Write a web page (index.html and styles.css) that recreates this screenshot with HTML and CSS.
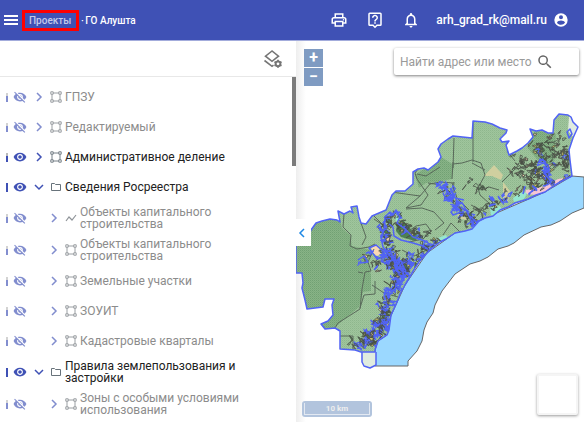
FILE: index.html
```html
<!DOCTYPE html>
<html lang="ru">
<head>
<meta charset="utf-8">
<meta name="viewport" content="width=device-width, initial-scale=1">
<title>ГО Алушта</title>
<link rel="stylesheet" href="styles.css">
</head>
<body>
<svg class="sprite" aria-hidden="true">
  <symbol id="eye" viewBox="0 0 24 24"><path d="M12 4.500C7 4.500 2.730 7.610 1 12c1.730 4.390 6 7.500 11 7.500s9.270-3.110 11-7.500c-1.730-4.390-6-7.500-11-7.500zM12 17c-2.760 0-5-2.240-5-5s2.240-5 5-5 5 2.240 5 5-2.240 5-5 5zm0-8c-1.660 0-3 1.340-3 3s1.340 3 3 3 3-1.340 3-3-1.340-3-3-3z"/></symbol>
  <symbol id="eye-off" viewBox="0 0 24 24"><path d="M12 7c2.760 0 5 2.240 5 5 0 .65-.13 1.260-.36 1.830l2.920 2.920c1.510-1.260 2.700-2.890 3.430-4.750-1.730-4.390-6-7.500-11-7.500-1.400 0-2.740.25-3.980.7l2.160 2.160C10.740 7.130 11.350 7 12 7zM2 4.270l2.280 2.280.46.46C3.080 8.300 1.780 10.020 1 12c1.730 4.390 6 7.500 11 7.500 1.550 0 3.030-.3 4.380-.84l.42.42L19.730 22 21 20.730 3.270 3 2 4.270zM7.530 9.800l1.550 1.550c-.05.21-.08.43-.08.65 0 1.660 1.340 3 3 3 .22 0 .44-.03.65-.08l1.550 1.550c-.67.33-1.410.53-2.200.53-2.760 0-5-2.240-5-5 0-.79.2-1.530.53-2.200zm4.310-.78l3.150 3.150.02-.16c0-1.660-1.340-3-3-3l-.17.01z"/></symbol>
  <symbol id="right" viewBox="0 0 12 12"><path d="M4 2l4 4-4 4" fill="none" stroke="currentColor" stroke-width="1.500"/></symbol>
  <symbol id="down" viewBox="0 0 12 12"><path d="M2 4l4 4 4-4" fill="none" stroke="currentColor" stroke-width="1.500"/></symbol>
  <symbol id="area" viewBox="0 0 12 12"><path d="M2 2h8v8H2z" fill="none" stroke="currentColor" stroke-width=".9"/><path d="M.8.800h2.400v2.400H.8zM8.800.800h2.400v2.400H8.800zM.8 8.800h2.400v2.400H.8zM8.800 8.800h2.400v2.400H8.800z" fill="#fff" stroke="currentColor" stroke-width=".9"/></symbol>
  <symbol id="line" viewBox="0 0 12 12"><path d="M1 9l3-4 3 3 4-5" fill="none" stroke="currentColor" stroke-width="1.200"/></symbol>
  <symbol id="folder" viewBox="0 0 12 12"><path d="M1.500 2.500h3l1 1h5v6h-9z" fill="none" stroke="currentColor"/></symbol>
</svg>

<header class="bar">
  <button class="icon-btn menu" aria-label="Меню"><svg viewBox="0 0 14 10"><path d="M0 1h14M0 5h14M0 9h14" stroke="currentColor" stroke-width="2"/></svg></button>
  <nav class="crumbs"><a class="marked" href="#">Проекты</a><span class="dot">·</span><a href="#">ГО Алушта</a></nav>
  <div class="tools">
    <button class="icon-btn" aria-label="Печать"><svg viewBox="0 0 24 24"><path d="M19 8h-1V3H6v5H5c-1.660 0-3 1.340-3 3v6h4v4h12v-4h4v-6c0-1.660-1.340-3-3-3zM8 5h8v3H8V5zm8 12v2H8v-4h8v2zm2-2v-2H6v2H4v-4c0-.55.45-1 1-1h14c.55 0 1 .45 1 1v4h-2z"/><circle cx="18" cy="11.500" r="1"/></svg></button>
    <button class="icon-btn" aria-label="Помощь"><svg viewBox="0 0 24 24"><path d="M19 2H5a2 2 0 0 0-2 2v14a2 2 0 0 0 2 2h4l3 3 3-3h4a2 2 0 0 0 2-2V4a2 2 0 0 0-2-2zm0 16h-4.830L12 20.170 9.830 18H5V4h14v14zM11 15h2v2h-2zM12 7c1.100 0 2 .9 2 2 0 2-3 1.750-3 5h2c0-2.250 3-2.500 3-5 0-2.210-1.790-4-4-4S8 6.790 8 9h2c0-1.100.9-2 2-2z"/></svg></button>
    <button class="icon-btn" aria-label="Уведомления"><svg viewBox="0 0 24 24"><path d="M12 22c1.100 0 2-.9 2-2h-4c0 1.100.9 2 2 2zm6-6v-5c0-3.070-1.630-5.640-4.500-6.320V4a1.500 1.500 0 0 0-3 0v.68C7.640 5.360 6 7.920 6 11v5l-2 2v1h16v-1l-2-2zm-2 1H8v-6c0-2.480 1.510-4.500 4-4.500s4 2.020 4 4.500v6z"/></svg></button>
  </div>
  <button class="user">arh_grad_rk@mail.ru<svg viewBox="0 0 24 24"><path d="M12 2a10 10 0 1 0 0 20 10 10 0 0 0 0-20zm0 3a3 3 0 1 1 0 6 3 3 0 0 1 0-6zm0 14.200c-2.500 0-4.710-1.280-6-3.220.03-1.990 4-3.080 6-3.080s5.970 1.090 6 3.080a7.200 7.200 0 0 1-6 3.220z"/></svg></button>
</header>

<div class="work">
  <aside class="side">
    <div class="side-head"><button class="icon-btn layers" aria-label="Настройка слоёв"><svg viewBox="0 0 20 20"><path d="M9 2L2.500 7.200 9 12.300l6.500-5.100z" fill="none" stroke="currentColor" stroke-width="1.600"/><path d="M1.500 11.500L9 17.300l1.500-1.200" fill="none" stroke="currentColor" stroke-width="1.600"/><circle cx="15" cy="14.800" r="2.400" fill="none" stroke="currentColor" stroke-width="2"/><path d="M15 10.800v1.500M15 17.300v1.500M11.500 12.800l1.500.9M17 15.900l1.500.9M11.500 16.800l1.500-.9M17 13.700l1.500-.9" stroke="currentColor" stroke-width="1.800"/></svg></button></div>
    <ul class="tree">
      <li class="row off"><i class="info"></i><button class="see" aria-label="Показать слой"><svg><use href="#eye-off"/></svg></button><button class="arrow" aria-label="Развернуть"><svg><use href="#right"/></svg></button><svg class="kind"><use href="#area"/></svg><span>ГПЗУ</span></li>
      <li class="row off"><i class="info"></i><button class="see" aria-label="Показать слой"><svg><use href="#eye-off"/></svg></button><button class="arrow" aria-label="Развернуть"><svg><use href="#right"/></svg></button><svg class="kind"><use href="#area"/></svg><span>Редактируемый</span></li>
      <li class="row"><i class="info"></i><button class="see" aria-label="Скрыть слой"><svg><use href="#eye"/></svg></button><button class="arrow" aria-label="Развернуть"><svg><use href="#right"/></svg></button><svg class="kind"><use href="#area"/></svg><span>Административное деление</span></li>
      <li class="row"><i class="info full"></i><button class="see" aria-label="Скрыть слой"><svg><use href="#eye"/></svg></button><button class="arrow" aria-label="Свернуть"><svg><use href="#down"/></svg></button><svg class="kind"><use href="#folder"/></svg><span>Сведения Росреестра</span></li>
      <li class="row off child"><i class="info"></i><button class="see" aria-label="Показать слой"><svg><use href="#eye-off"/></svg></button><button class="arrow" aria-label="Развернуть"><svg><use href="#right"/></svg></button><svg class="kind"><use href="#line"/></svg><span>Объекты капитального строительства</span></li>
      <li class="row off child"><i class="info"></i><button class="see" aria-label="Показать слой"><svg><use href="#eye-off"/></svg></button><button class="arrow" aria-label="Развернуть"><svg><use href="#right"/></svg></button><svg class="kind"><use href="#area"/></svg><span>Объекты капитального строительства</span></li>
      <li class="row off child"><i class="info"></i><button class="see" aria-label="Показать слой"><svg><use href="#eye-off"/></svg></button><button class="arrow" aria-label="Развернуть"><svg><use href="#right"/></svg></button><svg class="kind"><use href="#area"/></svg><span>Земельные участки</span></li>
      <li class="row off child"><i class="info"></i><button class="see" aria-label="Показать слой"><svg><use href="#eye-off"/></svg></button><button class="arrow" aria-label="Развернуть"><svg><use href="#right"/></svg></button><svg class="kind"><use href="#area"/></svg><span>ЗОУИТ</span></li>
      <li class="row off child"><i class="info"></i><button class="see" aria-label="Показать слой"><svg><use href="#eye-off"/></svg></button><button class="arrow" aria-label="Развернуть"><svg><use href="#right"/></svg></button><svg class="kind"><use href="#area"/></svg><span>Кадастровые кварталы</span></li>
      <li class="row"><i class="info full"></i><button class="see" aria-label="Скрыть слой"><svg><use href="#eye"/></svg></button><button class="arrow" aria-label="Свернуть"><svg><use href="#down"/></svg></button><svg class="kind"><use href="#folder"/></svg><span>Правила землепользования и застройки</span></li>
      <li class="row off child"><i class="info"></i><button class="see" aria-label="Показать слой"><svg><use href="#eye-off"/></svg></button><button class="arrow" aria-label="Развернуть"><svg><use href="#right"/></svg></button><svg class="kind"><use href="#area"/></svg><span>Зоны с особыми условиями использования</span></li>
    </ul>
    <div class="thumb"></div>
  </aside>

  <main class="map">
    <svg class="canvas" viewBox="296 41 288 381" preserveAspectRatio="xMinYMin slice" role="img" aria-label="Карта">
      <defs>
        <pattern id="light" width="2" height="2" patternUnits="userSpaceOnUse"><rect width="2" height="2" fill="#a0c59d"/><rect width="1" height="1" fill="#8eb78d"/><rect x="1" y="1" width="1" height="1" fill="#97bf95"/></pattern>
        <pattern id="dark" width="2" height="2" patternUnits="userSpaceOnUse"><rect width="2" height="2" fill="#88b486"/><rect width="1" height="1" fill="#71a074"/><rect x="1" y="1" width="1" height="1" fill="#7da97e"/></pattern>
        <clipPath id="land"><path id="outline" d="M296 245L303 243 307 239 311 230 316 223 322 221 330 219 337 220 340 222 338 211 344 214 350 211 353 213 351 207 357 206 359 217 361 223 366 224 372 216 379 213 386 210 390 200 392 195 396 191 405 191 413 184 413 172 418 169 424 168 428 170 438 162 441 157 438 149 441 144 448 139 453 136 472 138 473 121 485 122 492 124 500 128 507 130 506 133 500 139 502 142 509 141 506 145 509 155 517 151 522 148 528 143 533 137 530 129 536 131 542 130 548 133 553 133 554 120 559 114 568 115 571 117 573 122 578 127 573 138 569 150 570 160 572 176 560 182 552 187 545 192 536 195 528 199 515 203 508 207 500 210 493 216 485 218 479 221 472 229 465 231 455 233 446 239 440 242 431 249 427 253 419 262 415 268 405 285 400 294 397 302 391 315 389 330 387 335 378 341 375 350 375 352 361 352 355 350 340 349 340 331 335 328 325 329 321 324 328 321 333 315 332 305 334 299 325 299 323 307 307 309 305 300 302 288 303 283 302 273 296 273z"/></clipPath>
      </defs>
      <path class="sea" d="M375 366V350L378 341 387 335 390 318 405 285 427 253 455 233 485 218 545 192 572 176 584 177V208L572 213 560 221 551 225 541 227 524 235 514 243 508 246 498 249 488 257 480 261 470 264 455 274 442 291 435 305 433 313 427 322 424 330 422 341 417 351 408 361V366z"/>
      <path class="pale" d="M361 352h15v14l-7 2-7-4z"/>
      <g clip-path="url(#land)">
        <path d="M296 41h288v381H296z" fill="url(#light)"/>
        <path d="M296 246L311 215 340 219 342 228 350 235 352 246 371 250 368 263 371 275 371 291 363 292 359 307 334 328 296 340z" fill="url(#dark)"/>
        <path d="M415 175L441 157 454 165 452 179 436 182 426 183 419 188zM535 130L556 134 554 166 540 163 527 147z" fill="url(#dark)"/>
        <path d="M569 116l10 8 0 5-5 9-6-7z" fill="#e0ecdf"/>
        <path d="M484 176l10-11 9 10-2 5-9-4zM503 182l7 9-2 11-5-4z" fill="#cfcf9f"/>
        <path d="M457 215l6-3 4 8-6-1z" fill="#cfcf9f"/>
        <path d="M397 224l6-4 10 12 7 4-5 5-14-4-5-6zM384 234l6-2 0 12-6-3z" fill="#4d8052"/>
        <path d="M371 246l7 0 3 8-4 2-5-4z" fill="#f9d8b4"/>
        <path d="M526 190l20-4 12-7 13-2-12 9-22 9-12-1z" fill="#f6c6d5"/>
        <path d="M513 198l9-6 5 1-3 6-10 3zM490 208l10-2 3 5-12 5zM438 238l8-3 2 4-9 4zM395 217l5-2 0 5-4 1z" fill="#96e6d0"/>
        <g class="quarters">
          <path d="M344 214l-1 13 8 8-1 11 7 3 12-2 6-3M361 223l5 14-4 8M335 328l3-5 22-14 2-20 3-17 6-1-3-9 6-13M363 273l-5-1M373 215l12 12-2 8M372 285l12 8 14 4M360 308l4-13 11-1v-13M340 336h13v14"/>
          <path d="M391 192l29 4-14 12 15-3 7-10-11-16-2-6 3-4M420 196l10-12 10-2 14 1M406 209l16-1 12 4M417 174l9 2 14-9M454 138l-1 30M453 162l-1 17M473 122v40M454 182l-2 20 10 8M473 122v0M428 183l13 2M472 163l13 7M453 164l9-1 10-3 9 3 4 12M485 175l-7 13 2 7 10 9M452 183l5 15 12 12M502 182l13-13 12-2M434 212l10 11-9 7M443 235l8-12 10 10M374 219l16 11"/>
          <path d="M404 234l12-8 10-2 5 7-8 8-14 3M402 250l12 6 15-7M507 151l8 10M499 190l-10-3-8 3M471 205l16 8"/>
        </g>
        <g id="parcels"></g>
        <g class="zones">
          <path d="M384 218l6-6 3 3 3-5 4 7-3 6 8 6 8 8 12 4-2 5-10-3-12-3-7-4-1-9-4-3M385 218l-1 12-3 7 2 10 7 9 8 7M369 248l7-3 7 6 0 6-6 2zM358 260l6-4 4 6-8 1M390 250l5 14 8 8 1 8-8 4-1 9"/>
          <path d="M443 186l8 9-5 4-3-6M450 188l7 13 6 3 6 12 5 10M455 198l9 2M457 206l-6 6 2 3 8-3M470 216l10 10M546 162l-6-3-1 3 7 2-2 9 5 6M525 186l-2 8M498 196l4 6 6 0"/>
        </g>
      </g>
      <use href="#outline" class="border"/>
      <path class="border" d="M362 352v10l2 4 6 2 6-3v-13M567 132l3-3 2 5-3 4z"/>
    </svg>
    <div class="zoom"><button aria-label="Приблизить">+</button><button aria-label="Отдалить">−</button></div>
    <form class="search"><input type="text" placeholder="Найти адрес или место" aria-label="Найти адрес или место"><button aria-label="Искать"><svg viewBox="0 0 24 24"><path d="M15.500 14h-.79l-.28-.27A6.500 6.500 0 1 0 13.730 14.430l.27.28v.79l5 4.990L20.490 19zm-6 0a4.500 4.500 0 1 1 0-9 4.500 4.500 0 0 1 0 9z"/></svg></button></form>
    <button class="collapse" aria-label="Свернуть панель"><svg viewBox="0 0 12 12"><path d="M8 2L4 6l4 4" fill="none" stroke="currentColor" stroke-width="1.500"/></svg></button>
    <div class="scale"><span>10 km</span></div>
    <button class="basemap" aria-label="Подложка"></button>
  </main>
</div>
<script src="map.js"></script>
</body>
</html>
```
FILE: styles.css
```css
* { box-sizing: border-box; }
body {
  margin: 0;
  height: 100vh;
  display: flex;
  flex-direction: column;
  overflow: hidden;
  background: #fff;
  color: #212121;
  font-family: Roboto, "Liberation Sans", sans-serif;
  font-size: 12px;
}
button { padding: 0; border: 0; background: none; color: inherit; font: inherit; cursor: pointer; }
svg { display: block; fill: currentColor; }
.sprite { position: absolute; width: 0; height: 0; }

.bar {
  display: flex;
  align-items: center;
  height: 41px;
  flex: none;
  padding: 0 15px 0 4px;
  background: #3f51b5;
  border-bottom: 1px solid #a3acdc;
  color: #fff;
}
.menu svg { width: 14px; height: 10px; }
.crumbs { display: flex; align-items: center; margin-left: 4px; font-size: 10px; font-weight: 500; }
.crumbs a { color: inherit; text-decoration: none; }
.crumbs .marked { border: 3px solid #f00; padding: 0 5px 0 4px; line-height: 15px; color: #c5cae9; }
.crumbs .dot { width: 6px; text-align: center; }
.tools { display: flex; gap: 18px; margin-left: auto; }
.tools svg { width: 18px; height: 18px; }
.user svg { width: 16px; height: 16px; }
.user { display: flex; align-items: center; gap: 6px; margin-left: 16px; font-weight: 500; }

.work { display: flex; flex: 1; min-height: 0; }
.side { position: relative; width: 296px; flex: none; overflow: hidden; }
.side-head {
  display: flex;
  align-items: center;
  justify-content: flex-end;
  height: 36px;
  padding-right: 13px;
  border-bottom: 1px solid #e8e8e8;
  color: #757575;
}
.layers svg { width: 20px; height: 20px; }
.tree { margin: 0; padding: 5px 40px 0 6px; list-style: none; }
.row { display: flex; align-items: center; min-height: 30px; padding: 4px 0; line-height: 12px; }
.row button { flex: none; color: #3f51b5; }
.row svg { width: 12px; height: 12px; }
.row .see svg { width: 14px; height: 14px; }
.info { flex: none; width: 2px; height: 9px; margin-right: 5px; background: linear-gradient(#bbb 3px, #3f51b5 3px); }
.info.full { background: #3f51b5; }
.arrow { margin-left: 6px; }
.kind { flex: none; margin: 0 3px 0 5px; color: #68737b; }
.off { color: #8c8c8c; }
.off button, .off .info { opacity: .65; }
.off .kind { color: #8f9499; }
.child .arrow { margin-left: 21px; }
.thumb { position: absolute; top: 36px; right: 0; width: 4px; height: 89px; background: #7b7b7b; }

.map { position: relative; flex: 1; min-width: 0; overflow: hidden; }
.map::before { content: ""; position: absolute; inset: 0 auto 0 0; width: 10px; background: linear-gradient(90deg, #eee, #fff); }
.canvas { position: absolute; inset: 0; width: 100%; height: 100%; }
.sea { fill: #9bd8ff; stroke: #666; stroke-width: 1; }
.pale { fill: #e0ecdf; }
.border { fill: none; stroke: #5163f5; stroke-width: 1.500; stroke-linejoin: round; }
.quarters { fill: none; stroke: #59695a; stroke-width: 1; }
.zones { fill: none; stroke: #5163f5; stroke-width: 1.500; stroke-linejoin: round; }
.zoom { position: absolute; top: 8px; left: 8px; display: grid; gap: 1px; }
.zoom button { width: 19px; height: 18px; background: #7f9bc2; color: #fff; font-size: 16px; font-weight: 700; line-height: 18px; }
.search {
  position: absolute;
  top: 7px;
  right: 5px;
  display: flex;
  align-items: center;
  width: 185px;
  height: 27px;
  padding: 0 6px;
  border-radius: 2px;
  background: #fff;
  box-shadow: 0 1px 3px rgba(0, 0, 0, .5);
}
.search input { width: 136px; padding: 0; border: 0; outline: 0; background: none; font: 12px Roboto, sans-serif; }
.search input::placeholder { color: #9a9a9a; }
.search svg { width: 18px; height: 18px; fill: #666; }
.collapse { position: absolute; left: 0; top: 178px; width: 15px; height: 27px; background: #fff; color: #1e88e5; }
.collapse svg { width: 12px; height: 12px; }
.scale {
  position: absolute;
  left: 6px;
  bottom: 5px;
  width: 70px;
  padding: 2px;
  border-radius: 3px;
  background: #b2c4dd;
}
.scale span { display: block; height: 12px; border: 1px solid #e3e9f2; border-top: 0; color: #eee; font-size: 8px; font-weight: 700; line-height: 11px; text-align: center; }
.basemap { position: absolute; right: 6px; bottom: 7px; width: 41px; height: 41px; border: 2px solid #f5f5f5; border-radius: 2px; background: #fff; box-shadow: 0 1px 3px rgba(0, 0, 0, .4); }
```
FILE: map.js
```js
// Generalised parcel boundaries, drawn as short closed outlines inside each settlement.
let seed = 7;
const rnd = () => (seed = (seed * 16807) % 2147483647) / 2147483647;

// x1, y1, x2, y2, spread, count, share of municipal (blue) outlines
const settlements = [
  [358, 344, 384, 330, 9, 80, 0.4], [380, 328, 387, 305, 8, 60, 0.4],
  [386, 300, 398, 280, 7, 40, 0.45], [397, 278, 412, 256, 7, 60, 0.45],
  [362, 258, 400, 268, 7, 35, 0.2], [382, 250, 404, 268, 7, 50, 0.5],
  [382, 226, 392, 250, 6, 35, 0.4], [385, 222, 396, 214, 6, 22, 0.35],
  [400, 224, 430, 238, 8, 40, 0.15], [412, 262, 438, 241, 4, 35, 0.4],
  [441, 184, 462, 214, 5, 38, 0.7], [458, 214, 478, 222, 6, 30, 0.5],
  [478, 212, 520, 192, 6, 28, 0.3], [468, 184, 486, 188, 8, 9, 0],
  [515, 162, 545, 176, 13, 70, 0.05], [535, 140, 548, 165, 8, 28, 0.05],
  [555, 140, 566, 168, 10, 55, 0.03], [543, 160, 550, 184, 4, 20, 0.7],
  [524, 190, 570, 176, 5, 28, 0.3]
];
const fills = ["none", "none", "none", "none", "#f2d0ae", "#4d8052", "#c9c06a"];
let out = "";
for (const [x1, y1, x2, y2, spread, count, blue] of settlements) {
  for (let i = 0; i < count; i++) {
    const t = rnd();
    const x = x1 + (x2 - x1) * t + (rnd() + rnd() - 1) * spread;
    const y = y1 + (y2 - y1) * t + (rnd() + rnd() - 1) * spread;
    let d = `M${x.toFixed(1)} ${y.toFixed(1)}`;
    for (let k = 0; k < 4; k++) d += `l${((rnd() - 0.5) * 6).toFixed(1)} ${((rnd() - 0.5) * 6).toFixed(1)}`;
    const own = rnd() < blue;
    const fill = own ? "none" : fills[Math.floor(rnd() * fills.length)];
    out += `<path d="${d}z" fill="${fill}" stroke="${own ? "#5163f5" : "#4a5148"}" stroke-width="${own ? 1.2 : 0.8}"/>`;
  }
}
document.getElementById("parcels").innerHTML = out;
```
